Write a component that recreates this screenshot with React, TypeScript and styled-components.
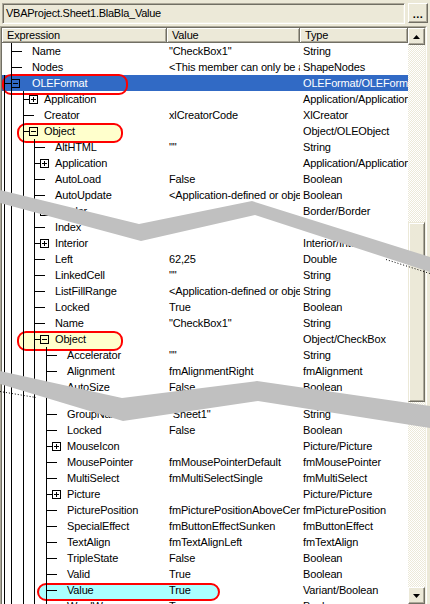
import styled, { createGlobalStyle } from 'styled-components';

const GlobalStyle = createGlobalStyle`
  html, body {
    margin: 0;
    padding: 0;
    background: #ece9d8;
  }
`;

type Kind = 'leaf' | 'plus' | 'minus';
type Mark = 'selected' | 'yellow' | 'cyan';

interface WatchNode {
  name?: string;
  value?: string;
  type?: string;
  level: number;
  kind?: Kind;
  mark?: Mark;
  guides?: number[];
  boxX?: number;
  tickFrom?: number;
  height?: number;
}

// x of the vertical guide line for each tree level
const GX = [4, 11, 23, 34, 46];

const rows: WatchNode[] = [
  { name: 'Name', value: '"CheckBox1"', type: 'String', level: 1, guides: [11] },
  { name: 'Nodes', value: '<This member can only be accessed for a group>', type: 'ShapeNodes', level: 1, guides: [11] },
  { name: 'OLEFormat', type: 'OLEFormat/OLEFormat', level: 1, kind: 'minus', mark: 'selected', guides: [4, 11], boxX: 11, tickFrom: 4 },
  { name: 'Application', type: 'Application/Application', level: 2, kind: 'plus' },
  { name: 'Creator', value: 'xlCreatorCode', type: 'XlCreator', level: 2 },
  { name: 'Object', type: 'Object/OLEObject', level: 2, kind: 'minus', mark: 'yellow' },
  { name: 'AltHTML', value: '""', type: 'String', level: 3 },
  { name: 'Application', type: 'Application/Application', level: 3, kind: 'plus' },
  { name: 'AutoLoad', value: 'False', type: 'Boolean', level: 3 },
  { name: 'AutoUpdate', value: '<Application-defined or object-defined error>', type: 'Boolean', level: 3 },
  { name: 'Border', type: 'Border/Border', level: 3, kind: 'plus' },
  { name: 'Index', level: 3 },
  { name: 'Interior', type: 'Interior/Interior', level: 3, kind: 'plus' },
  { name: 'Left', value: '62,25', type: 'Double', level: 3 },
  { name: 'LinkedCell', value: '""', type: 'String', level: 3 },
  { name: 'ListFillRange', value: '<Application-defined or object-defined error>', type: 'String', level: 3 },
  { name: 'Locked', value: 'True', type: 'Boolean', level: 3 },
  { name: 'Name', value: '"CheckBox1"', type: 'String', level: 3 },
  { name: 'Object', type: 'Object/CheckBox', level: 3, kind: 'minus', mark: 'yellow' },
  { name: 'Accelerator', value: '""', type: 'String', level: 4 },
  { name: 'Alignment', value: 'fmAlignmentRight', type: 'fmAlignment', level: 4 },
  { name: 'AutoSize', value: 'False', type: 'Boolean', level: 4 },
  { level: 4, height: 11 },
  { name: 'GroupName', value: '"Sheet1"', type: 'String', level: 4 },
  { name: 'Locked', value: 'False', type: 'Boolean', level: 4 },
  { name: 'MouseIcon', type: 'Picture/Picture', level: 4, kind: 'plus' },
  { name: 'MousePointer', value: 'fmMousePointerDefault', type: 'fmMousePointer', level: 4 },
  { name: 'MultiSelect', value: 'fmMultiSelectSingle', type: 'fmMultiSelect', level: 4 },
  { name: 'Picture', type: 'Picture/Picture', level: 4, kind: 'plus' },
  { name: 'PicturePosition', value: 'fmPicturePositionAboveCenter', type: 'fmPicturePosition', level: 4 },
  { name: 'SpecialEffect', value: 'fmButtonEffectSunken', type: 'fmButtonEffect', level: 4 },
  { name: 'TextAlign', value: 'fmTextAlignLeft', type: 'fmTextAlign', level: 4 },
  { name: 'TripleState', value: 'False', type: 'Boolean', level: 4 },
  { name: 'Valid', value: 'True', type: 'Boolean', level: 4 },
  { name: 'Value', value: 'True', type: 'Variant/Boolean', level: 4, mark: 'cyan' },
  { name: 'WordWrap', value: 'True', type: 'Boolean', level: 4 },
];

// red annotation rings, relative to their row
const rings: Record<Mark, { left: number; top: number; width: number; height: number; fill: string }> = {
  selected: { left: 0, top: -1, width: 126, height: 21, fill: 'transparent' },
  yellow: { left: 15, top: 0, width: 106, height: 20, fill: '#ffffcc' },
  cyan: { left: 35, top: 1, width: 183, height: 18, fill: '#aaffff' },
};

const Window = styled.div`
  position: relative;
  width: 430px;
  height: 604px;
  overflow: hidden;
  background: #ece9d8;
  color: #000;
  font-family: 'Liberation Sans', Arial, sans-serif;
  font-size: 11px;
  letter-spacing: -0.15px;
`;

const TopBar = styled.div`
  display: flex;
  align-items: flex-start;
  gap: 3px;
  padding: 3px 0 0 2px;
  height: 21px;
`;

const ContextField = styled.div`
  box-sizing: border-box;
  width: 403px;
  height: 21px;
  padding-left: 3px;
  line-height: 19px;
  letter-spacing: -0.25px;
  border: 1px solid;
  border-color: #aca899 #fff #fff #aca899;
  box-shadow: inset 1px 1px #716f64, inset -1px -1px #f1efe2;
  white-space: nowrap;
  overflow: hidden;
`;

const RaisedButton = styled.div<{ $w: number; $h: number }>`
  box-sizing: border-box;
  width: ${({ $w }) => $w}px;
  height: ${({ $h }) => $h}px;
  flex: none;
  display: grid;
  place-items: center;
  background: #ece9d8;
  border: 1px solid;
  border-color: #fff #716f64 #716f64 #fff;
  box-shadow: inset -1px -1px #aca899;
`;

const Dots = styled.span`
  font-weight: bold;
  font-size: 11px;
  line-height: 1;
  margin-top: 3px;
  letter-spacing: 0.5px;
`;

const Frame = styled.div`
  margin-top: 2px;
  width: 427px;
  box-sizing: border-box;
  border: 1px solid;
  border-color: #aca899 #fff #fff #aca899;
`;

const FrameInner = styled.div`
  display: flex;
  border: 1px solid;
  border-color: #716f64 #f1efe2 #f1efe2 #716f64;
  background: #fff;
`;

const ListBody = styled.div`
  width: 406px;
  height: 576px;
  overflow: hidden;
  flex: none;
`;

const Header = styled.div`
  display: grid;
  grid-template-columns: 165px 133px 108px;
  height: 15px;
  background: #ece9d8;
`;

const HeaderCell = styled.div`
  box-sizing: border-box;
  padding-left: 5px;
  line-height: 14px;
  border-right: 1px solid #716f64;
  border-bottom: 1px solid #716f64;
  box-shadow: inset 1px 1px #fff, inset -1px -1px #aca899;
  white-space: nowrap;
  overflow: hidden;
`;

const Row = styled.div<{ $selected: boolean; $h: number }>`
  position: relative;
  display: grid;
  grid-template-columns: 165px 133px 108px;
  height: ${({ $h }) => $h}px;
  line-height: 16px;
  background: ${({ $selected }) => ($selected ? '#316ac5' : 'transparent')};
  color: ${({ $selected }) => ($selected ? '#fff' : '#000')};
`;

const Cell = styled.div<{ $pad?: number }>`
  position: relative;
  z-index: 1;
  overflow: hidden;
  white-space: nowrap;
  padding-left: ${({ $pad }) => $pad ?? 0}px;
`;

const ExprCell = styled(Cell)`
  display: flex;
  align-items: flex-start;
`;

const TreeSvg = styled.svg`
  display: block;
  flex: none;
`;

const Ring = styled.div<{ $left: number; $top: number; $w: number; $h: number; $fill: string }>`
  position: absolute;
  z-index: 0;
  left: ${({ $left }) => $left}px;
  top: ${({ $top }) => $top}px;
  width: ${({ $w }) => $w}px;
  height: ${({ $h }) => $h}px;
  box-sizing: border-box;
  border: 2px solid #ff0000;
  border-radius: 9px;
  background: ${({ $fill }) => $fill};
`;

const ScrollBar = styled.div`
  width: 17px;
  height: 576px;
  flex: none;
  display: flex;
  flex-direction: column;
`;

const Track = styled.div<{ $h: number }>`
  height: ${({ $h }) => $h}px;
  background: repeating-conic-gradient(#fff 0% 25%, #ece9d8 0% 50%) 0 0 / 2px 2px;
`;

const Thumb = styled.div<{ $h: number }>`
  box-sizing: border-box;
  height: ${({ $h }) => $h}px;
  background: #ece9d8;
  border: 1px solid;
  border-color: #ece9d8 #716f64 #716f64 #ece9d8;
  box-shadow: inset 1px 1px #fff, inset -1px -1px #aca899;
`;

const Tear = styled.svg`
  position: absolute;
  left: 0;
  top: 0;
  z-index: 10;
  pointer-events: none;
`;

function TreeMark({ node, height }: { node: WatchNode; height: number }) {
  const gx = GX[node.level];
  const textX = gx + 21;
  const width = textX - 2;
  const guides = node.guides ?? [4, ...GX.slice(1, node.level + 1)];
  const mid = 8;
  const kind = node.name ? node.kind ?? 'leaf' : undefined;
  const boxX = node.boxX ?? textX - 15;
  const tickFrom = node.tickFrom ?? gx;
  const y = mid + 0.5;

  return (
    <TreeSvg width={width} height={height} viewBox={`2 0 ${width} ${height}`} shapeRendering="crispEdges">
      {guides.map((x) => (
        <line key={x} x1={x + 0.5} y1={0} x2={x + 0.5} y2={height} stroke="#000" />
      ))}
      {kind === 'leaf' && <line x1={gx} y1={y} x2={gx + 11} y2={y} stroke="#000" />}
      {(kind === 'plus' || kind === 'minus') && (
        <>
          <line x1={tickFrom} y1={y} x2={boxX} y2={y} stroke="#000" />
          <rect x={boxX + 0.5} y={mid - 3.5} width={8} height={8} fill="none" stroke="#000" />
          <line x1={boxX + 2} y1={y} x2={boxX + 7} y2={y} stroke="#000" />
          {kind === 'plus' && <line x1={boxX + 4.5} y1={mid - 2} x2={boxX + 4.5} y2={mid + 3} stroke="#000" />}
        </>
      )}
    </TreeSvg>
  );
}

function Arrow({ down }: { down?: boolean }) {
  return (
    <svg width="7" height="4" viewBox="0 0 7 4">
      <polygon points={down ? '0,0 7,0 3.5,4' : '0,4 7,4 3.5,0'} fill="#000" />
    </svg>
  );
}

export default function App() {
  return (
    <Window>
      <GlobalStyle />
      <TopBar>
        <ContextField>VBAProject.Sheet1.BlaBla_Value</ContextField>
        <RaisedButton $w={20} $h={20}>
          <Dots>...</Dots>
        </RaisedButton>
      </TopBar>

      <Frame>
        <FrameInner>
          <ListBody>
            <Header>
              <HeaderCell>Expression</HeaderCell>
              <HeaderCell>Value</HeaderCell>
              <HeaderCell>Type</HeaderCell>
            </Header>
            {rows.map((node, i) => {
              const h = node.height ?? 16;
              const ring = node.mark ? rings[node.mark] : undefined;
              return (
                <Row key={i} $selected={node.mark === 'selected'} $h={h}>
                  {ring && (
                    <Ring $left={ring.left} $top={ring.top} $w={ring.width} $h={ring.height} $fill={ring.fill} />
                  )}
                  <ExprCell>
                    <TreeMark node={node} height={h} />
                    <span>{node.name}</span>
                  </ExprCell>
                  <Cell $pad={2}>{node.value}</Cell>
                  <Cell $pad={3}>{node.type}</Cell>
                </Row>
              );
            })}
          </ListBody>

          <ScrollBar>
            <RaisedButton $w={17} $h={17}>
              <Arrow />
            </RaisedButton>
            <Track $h={177} />
            <Thumb $h={180} />
            <Track $h={185} />
            <RaisedButton $w={17} $h={17}>
              <Arrow down />
            </RaisedButton>
          </ScrollBar>
        </FrameInner>
      </Frame>

      <Tear width="430" height="604" viewBox="0 0 430 604">
        <polygon
          points="0,190 139,224 252,201 430,257 430,272 255,215 141,241 0,203"
          fill="#c0c0c0"
        />
        <polygon
          points="0,371 122,398 257,381 430,406 430,428 258,401 123,421 0,384"
          fill="#c0c0c0"
        />
        <line x1="386" y1="259.5" x2="430" y2="273.5" stroke="#000" strokeDasharray="1 2" />
        <line x1="0" y1="391.5" x2="36" y2="397.5" stroke="#000" strokeDasharray="1 2" />
      </Tear>
    </Window>
  );
}
